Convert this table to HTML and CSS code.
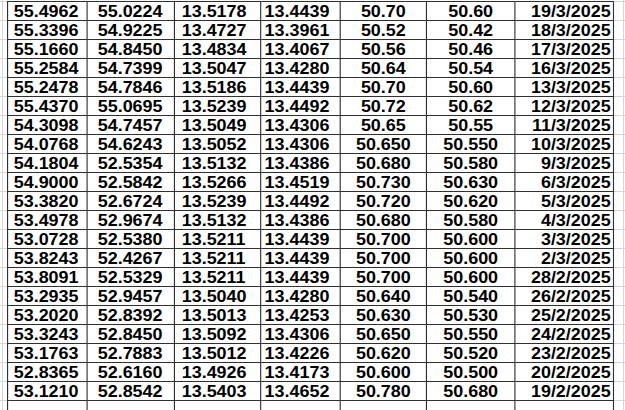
FILE: index.html
```html
<!DOCTYPE html>
<html>
<head>
<meta charset="utf-8">
<link rel="stylesheet" href="styles.css">
</head>
<body>
<div class="sheet">
  <table class="rates">
    <colgroup>
      <col class="c1"><col class="c2"><col class="c3"><col class="c4"><col class="c5"><col class="c6"><col class="c7">
    </colgroup>
    <tbody>
      <tr><td class="a">55.4962</td><td class="b">55.0224</td><td class="c">13.5178</td><td class="d">13.4439</td><td class="m">50.70</td><td class="m">50.60</td><td class="r">19/3/2025</td></tr>
      <tr><td class="a">55.3396</td><td class="b">54.9225</td><td class="c">13.4727</td><td class="d">13.3961</td><td class="m">50.52</td><td class="m">50.42</td><td class="r">18/3/2025</td></tr>
      <tr><td class="a">55.1660</td><td class="b">54.8450</td><td class="c">13.4834</td><td class="d">13.4067</td><td class="m">50.56</td><td class="m">50.46</td><td class="r">17/3/2025</td></tr>
      <tr><td class="a">55.2584</td><td class="b">54.7399</td><td class="c">13.5047</td><td class="d">13.4280</td><td class="m">50.64</td><td class="m">50.54</td><td class="r">16/3/2025</td></tr>
      <tr><td class="a">55.2478</td><td class="b">54.7846</td><td class="c">13.5186</td><td class="d">13.4439</td><td class="m">50.70</td><td class="m">50.60</td><td class="r">13/3/2025</td></tr>
      <tr><td class="a">55.4370</td><td class="b">55.0695</td><td class="c">13.5239</td><td class="d">13.4492</td><td class="m">50.72</td><td class="m">50.62</td><td class="r">12/3/2025</td></tr>
      <tr><td class="a">54.3098</td><td class="b">54.7457</td><td class="c">13.5049</td><td class="d">13.4306</td><td class="m">50.65</td><td class="m">50.55</td><td class="r">11/3/2025</td></tr>
      <tr><td class="a">54.0768</td><td class="b">54.6243</td><td class="c">13.5052</td><td class="d">13.4306</td><td class="m">50.650</td><td class="m">50.550</td><td class="r">10/3/2025</td></tr>
      <tr><td class="a">54.1804</td><td class="b">52.5354</td><td class="c">13.5132</td><td class="d">13.4386</td><td class="m">50.680</td><td class="m">50.580</td><td class="r">9/3/2025</td></tr>
      <tr><td class="a">54.9000</td><td class="b">52.5842</td><td class="c">13.5266</td><td class="d">13.4519</td><td class="m">50.730</td><td class="m">50.630</td><td class="r">6/3/2025</td></tr>
      <tr><td class="a">53.3820</td><td class="b">52.6724</td><td class="c">13.5239</td><td class="d">13.4492</td><td class="m">50.720</td><td class="m">50.620</td><td class="r">5/3/2025</td></tr>
      <tr><td class="a">53.4978</td><td class="b">52.9674</td><td class="c">13.5132</td><td class="d">13.4386</td><td class="m">50.680</td><td class="m">50.580</td><td class="r">4/3/2025</td></tr>
      <tr><td class="a">53.0728</td><td class="b">52.5380</td><td class="c">13.5211</td><td class="d">13.4439</td><td class="m">50.700</td><td class="m">50.600</td><td class="r">3/3/2025</td></tr>
      <tr><td class="a">53.8243</td><td class="b">52.4267</td><td class="c">13.5211</td><td class="d">13.4439</td><td class="m">50.700</td><td class="m">50.600</td><td class="r">2/3/2025</td></tr>
      <tr><td class="a">53.8091</td><td class="b">52.5329</td><td class="c">13.5211</td><td class="d">13.4439</td><td class="m">50.700</td><td class="m">50.600</td><td class="r">28/2/2025</td></tr>
      <tr><td class="a">53.2935</td><td class="b">52.9457</td><td class="c">13.5040</td><td class="d">13.4280</td><td class="m">50.640</td><td class="m">50.540</td><td class="r">26/2/2025</td></tr>
      <tr><td class="a">53.2020</td><td class="b">52.8392</td><td class="c">13.5013</td><td class="d">13.4253</td><td class="m">50.630</td><td class="m">50.530</td><td class="r">25/2/2025</td></tr>
      <tr><td class="a">53.3243</td><td class="b">52.8450</td><td class="c">13.5092</td><td class="d">13.4306</td><td class="m">50.650</td><td class="m">50.550</td><td class="r">24/2/2025</td></tr>
      <tr><td class="a">53.1763</td><td class="b">52.7883</td><td class="c">13.5012</td><td class="d">13.4226</td><td class="m">50.620</td><td class="m">50.520</td><td class="r">23/2/2025</td></tr>
      <tr><td class="a">52.8365</td><td class="b">52.6160</td><td class="c">13.4926</td><td class="d">13.4173</td><td class="m">50.600</td><td class="m">50.500</td><td class="r">20/2/2025</td></tr>
      <tr><td class="a">53.1210</td><td class="b">52.8542</td><td class="c">13.5403</td><td class="d">13.4652</td><td class="m">50.780</td><td class="m">50.680</td><td class="r">19/2/2025</td></tr>
      <tr><td></td><td></td><td></td><td></td><td></td><td></td><td></td></tr>
    </tbody>
  </table>
</div>
</body>
</html>
```

FILE: styles.css
```css
html, body {
  margin: 0;
  padding: 0;
  overflow: hidden;
  background: #fff;
}

.sheet {
  width: 625px;
  height: 410px;
  overflow: hidden;
  display: flex;
  align-items: flex-start;
  background-image:
    linear-gradient(to right, transparent 2px, #d6d6d6 2px, #d6d6d6 3px, transparent 3px),
    linear-gradient(to right, transparent 623px, #d6d6d6 623px, #d6d6d6 624px, transparent 624px),
    repeating-linear-gradient(to bottom, #d6d6d6 0, #d6d6d6 1px, transparent 1px, transparent 19px);
  background-position: 0 0, 0 0, 0 1px;
}

.rates {
  flex: none;
  margin: 1px 0 0 7px;
  border-collapse: collapse;
  table-layout: fixed;
  width: 541px;
  transform: scaleX(1.12);
  transform-origin: 0 0;
  font-family: "Liberation Sans", Arial, sans-serif;
  font-weight: bold;
  font-size: 16px;
  color: #000;
  background: #fff;
}

.c1 { width: 71px; }
.c2 { width: 78px; }
.c3 { width: 77px; }
.c4 { width: 71px; }
.c5 { width: 77px; }
.c6 { width: 79px; }
.c7 { width: 88px; }

.rates tr {
  height: 19px;
}

.rates td {
  border: 1px solid #303030;
  padding: 2px 0 0 0;
  height: 16px;
  line-height: 16px;
  vertical-align: top;
  white-space: nowrap;
  overflow: hidden;
}

.rates td.a { padding-left: 5px; }
.rates td.b { padding-left: 9px; }
.rates td.c { padding-left: 6px; }
.rates td.d { padding-left: 3px; }
.rates td.m { text-align: center; }
.rates td.r { text-align: right; padding-right: 2px; }
```
